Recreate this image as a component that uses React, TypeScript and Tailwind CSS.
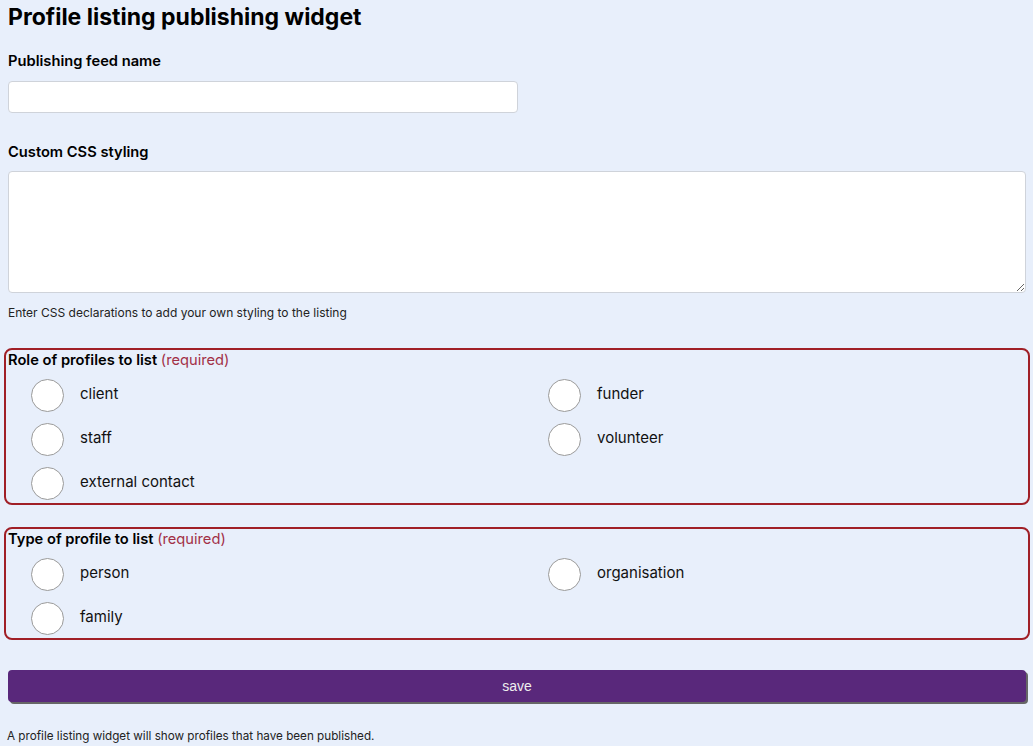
const roles = ["client", "funder", "staff", "volunteer", "external contact"];
const types = ["person", "organisation", "family"];

function RadioGroup({ legend, options }: { legend: string; options: string[] }) {
  return (
    <div className="-mx-1 rounded-lg border-2 border-[#a01f26] pb-[3px]">
      <div className="h-5 pl-[2px] text-[14.7px] leading-5 font-semibold text-black">
        {legend} <span className="font-normal text-[#a23047]">(required)</span>
      </div>
      <div className="mt-[9px] grid grid-cols-2 gap-x-3 gap-y-[11px]">
        {options.map((o) => (
          <label key={o} className="flex items-center pl-[25px]">
            <span className="h-[33px] w-[33px] shrink-0 rounded-full border border-[#9a9a9a] bg-white" />
            <span className="ml-4 -mt-[2px] text-[15px] text-[#111]">{o}</span>
          </label>
        ))}
      </div>
    </div>
  );
}

export default function App() {
  return (
    <div className="min-h-screen bg-[#e8effb] pt-[3px] pr-[7px] pl-2 font-['Inter',sans-serif] text-black">
      <h1 className="text-[23px] leading-7 font-bold">Profile listing publishing widget</h1>

      <div className="mt-5 h-5 text-[14.7px] leading-5 font-semibold">Publishing feed name</div>
      <input className="mt-[10px] block h-8 w-[510px] rounded border border-[#cfd3da] bg-white" />

      <div className="mt-[29px] h-5 text-[14.7px] leading-5 font-semibold">Custom CSS styling</div>
      <textarea className="mt-[9px] block h-[122px] w-full rounded border border-[#cfd3da] bg-white" />
      <p className="mt-3 text-[12px] leading-4 text-[#222]">
        Enter CSS declarations to add your own styling to the listing
      </p>

      <div className="mt-[27px]">
        <RadioGroup legend="Role of profiles to list" options={roles} />
      </div>
      <div className="mt-[22px]">
        <RadioGroup legend="Type of profile to list" options={types} />
      </div>

      <button className="mt-[30px] block h-8 w-full rounded bg-[#59287b] font-['Liberation_Sans',sans-serif] text-[14px] text-[#eee] shadow-[2px_2px_0_#666]">
        save
      </button>

      <p className="mt-[26px] -ml-[1px] pb-2 text-[11.7px] leading-4 text-[#222]">
        A profile listing widget will show profiles that have been published.
      </p>
    </div>
  );
}
